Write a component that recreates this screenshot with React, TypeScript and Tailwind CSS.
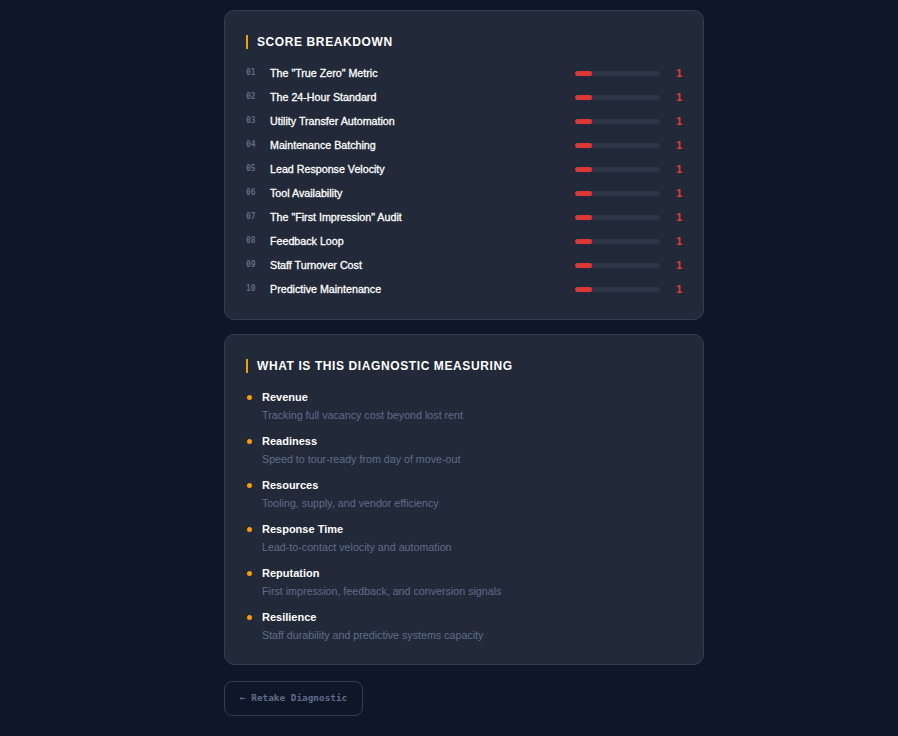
const metrics = [
  "The \"True Zero\" Metric",
  "The 24-Hour Standard",
  "Utility Transfer Automation",
  "Maintenance Batching",
  "Lead Response Velocity",
  "Tool Availability",
  "The \"First Impression\" Audit",
  "Feedback Loop",
  "Staff Turnover Cost",
  "Predictive Maintenance",
];

const measures = [
  { name: "Revenue", desc: "Tracking full vacancy cost beyond lost rent" },
  { name: "Readiness", desc: "Speed to tour-ready from day of move-out" },
  { name: "Resources", desc: "Tooling, supply, and vendor efficiency" },
  { name: "Response Time", desc: "Lead-to-contact velocity and automation" },
  { name: "Reputation", desc: "First impression, feedback, and conversion signals" },
  { name: "Resilience", desc: "Staff durability and predictive systems capacity" },
];

function SectionTitle({ children }: { children: React.ReactNode }) {
  return (
    <div className="flex items-center gap-[9px]">
      <span className="w-[2px] h-[14px] bg-[#f59e0b]" />
      <h2 className="text-[12px] font-bold tracking-[0.05em] text-white uppercase leading-4">
        {children}
      </h2>
    </div>
  );
}

export default function App() {
  return (
    <div
      className="min-h-[736px] w-full bg-[#0f1628] pt-[10px] pl-[224px]"
      style={{ fontFamily: '"Liberation Sans", Arial, sans-serif' }}
    >
      <div className="w-[480px] flex flex-col">
        {/* Score breakdown */}
        <section className="rounded-[10px] border border-[#323c52] bg-[#222939] px-[21px] pt-[23px] pb-[18px]">
          <SectionTitle>Score Breakdown</SectionTitle>
          <div className="mt-[11px] flex flex-col">
            {metrics.map((m, i) => (
              <div key={m} className="h-6 flex items-center">
                <span
                  className="w-6 text-[8px] font-bold text-[#5f6b82]"
                  style={{ fontFamily: '"DejaVu Sans Mono", monospace' }}
                >
                  {String(i + 1).padStart(2, "0")}
                </span>
                <span className="flex-1 text-[10.7px] text-white [-webkit-text-stroke:0.3px_white]">{m}</span>
                <div className="w-[85px] h-[5px] rounded-full bg-[#2e3648] overflow-hidden">
                  <div className="h-full w-[17px] rounded-full bg-[#dc3838]" />
                </div>
                <span className="w-[22px] text-right text-[11px] font-bold text-[#e03c3c]">1</span>
              </div>
            ))}
          </div>
        </section>

        {/* What is measured */}
        <section className="mt-[14px] rounded-[10px] border border-[#323c52] bg-[#222939] px-[21px] pt-[23px] pb-[21px]">
          <SectionTitle>What is this diagnostic measuring</SectionTitle>
          <div className="mt-[15px] flex flex-col gap-[10px]">
            {measures.map((m) => (
              <div key={m.name} className="flex">
                <span className="mt-[6px] ml-[1px] w-[5px] h-[5px] rounded-full bg-[#f59e0b]" />
                <div className="ml-[10px] flex flex-col">
                  <span className="text-[11px] font-bold text-white leading-4">{m.name}</span>
                  <span className="mt-[2px] text-[10.7px] text-[#5f6d8a] leading-4">{m.desc}</span>
                </div>
              </div>
            ))}
          </div>
        </section>

        <div className="mt-[16px]">
          <button
            className="h-[35px] px-[15px] rounded-lg border border-[#323c52] text-[9.4px] font-bold text-[#5f6d8a]"
            style={{ fontFamily: '"DejaVu Sans Mono", monospace' }}
          >
            ← Retake Diagnostic
          </button>
        </div>
      </div>
    </div>
  );
}
